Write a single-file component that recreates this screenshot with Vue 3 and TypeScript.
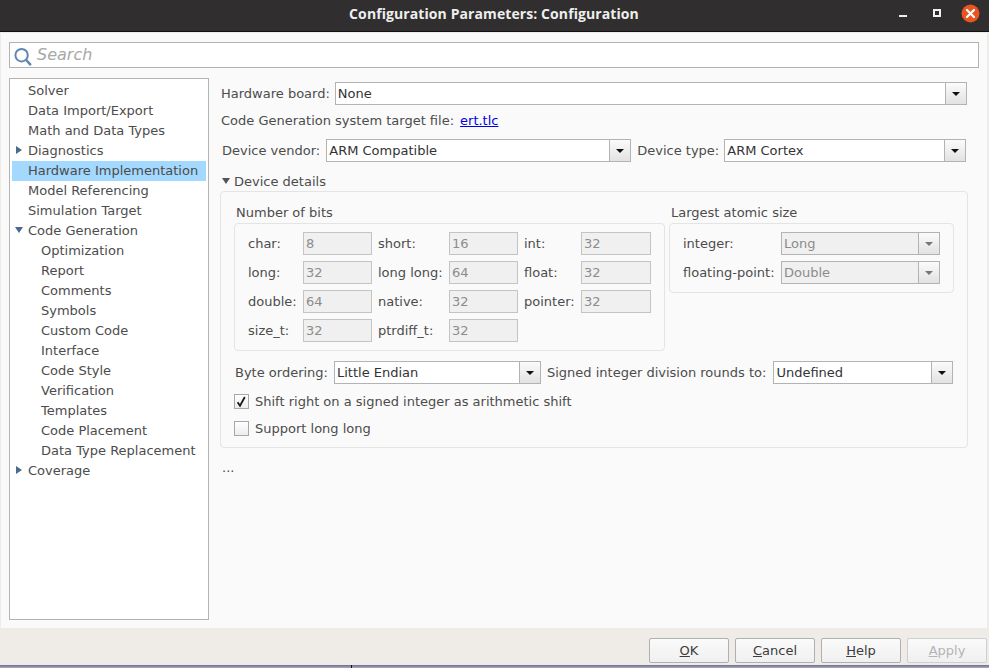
<script setup lang="ts">
interface TreeRow { label: string; indent: number; arrow?: 'right' | 'down'; selected?: boolean }
const tree: TreeRow[] = [
  { label: 'Solver', indent: 0 },
  { label: 'Data Import/Export', indent: 0 },
  { label: 'Math and Data Types', indent: 0 },
  { label: 'Diagnostics', indent: 0, arrow: 'right' },
  { label: 'Hardware Implementation', indent: 0, selected: true },
  { label: 'Model Referencing', indent: 0 },
  { label: 'Simulation Target', indent: 0 },
  { label: 'Code Generation', indent: 0, arrow: 'down' },
  { label: 'Optimization', indent: 1 },
  { label: 'Report', indent: 1 },
  { label: 'Comments', indent: 1 },
  { label: 'Symbols', indent: 1 },
  { label: 'Custom Code', indent: 1 },
  { label: 'Interface', indent: 1 },
  { label: 'Code Style', indent: 1 },
  { label: 'Verification', indent: 1 },
  { label: 'Templates', indent: 1 },
  { label: 'Code Placement', indent: 1 },
  { label: 'Data Type Replacement', indent: 1 },
  { label: 'Coverage', indent: 0, arrow: 'right' },
]
const bits = [
  ['char:', '8'], ['short:', '16'], ['int:', '32'],
  ['long:', '32'], ['long long:', '64'], ['float:', '32'],
  ['double:', '64'], ['native:', '32'], ['pointer:', '32'],
  ['size_t:', '32'], ['ptrdiff_t:', '32'],
]
</script>

<template>
  <div class="window">
    <header class="titlebar">
      <span class="title">Configuration Parameters: Configuration</span>
      <span class="ctl min"></span>
      <span class="ctl max"></span>
      <span class="ctl close">
        <svg width="19" height="19" viewBox="0 0 19 19"><circle cx="9.5" cy="9.5" r="9" fill="#e95420" /><path d="M6 6l7 7M13 6l-7 7" stroke="#fff" stroke-width="2.2" stroke-linecap="round" /></svg>
      </span>
    </header>

    <main class="panel">
      <div class="search">
        <svg width="20" height="20" viewBox="0 0 20 20"><circle cx="7.6" cy="8.2" r="6.2" fill="none" stroke="#5f88b0" stroke-width="2" /><path d="M12.2 13l4 4.4" stroke="#5f88b0" stroke-width="2.6" stroke-linecap="round" /></svg>
        <span>Search</span>
      </div>

      <div class="columns">
        <nav class="tree">
          <div v-for="r in tree" :key="r.label" class="row" :class="{ selected: r.selected, sub: r.indent }">
            <i v-if="r.arrow" :class="'tri-' + r.arrow"></i>
            {{ r.label }}
          </div>
        </nav>

        <section class="form">
          <div class="line hw">
            <label>Hardware board:</label>
            <div class="combo grow"><span>None</span><b><i></i></b></div>
          </div>
          <div class="line target">
            <label>Code Generation system target file:</label>
            <a>ert.tlc</a>
          </div>
          <div class="line device">
            <label>Device vendor:</label>
            <div class="combo vendor"><span>ARM Compatible</span><b><i></i></b></div>
            <label>Device type:</label>
            <div class="combo grow"><span>ARM Cortex</span><b><i></i></b></div>
          </div>
          <div class="details-head"><i class="tri-grey"></i>Device details</div>

          <div class="details">
            <div class="groups">
              <div class="bits">
                <div class="cap">Number of bits</div>
                <div class="box bitgrid">
                  <template v-for="b in bits" :key="b[0]">
                    <label>{{ b[0] }}</label>
                    <div class="field">{{ b[1] }}</div>
                  </template>
                </div>
              </div>
              <div class="atomic">
                <div class="cap">Largest atomic size</div>
                <div class="box atomgrid">
                  <label>integer:</label>
                  <div class="combo off"><span>Long</span><b><i></i></b></div>
                  <label>floating-point:</label>
                  <div class="combo off"><span>Double</span><b><i></i></b></div>
                </div>
              </div>
            </div>

            <div class="line order">
              <label class="l1">Byte ordering:</label>
              <div class="combo endian"><span>Little Endian</span><b><i></i></b></div>
              <label class="l2">Signed integer division rounds to:</label>
              <div class="combo round"><span>Undefined</span><b><i></i></b></div>
            </div>

            <div class="check first">
              <span class="cb">
                <svg width="13" height="13" viewBox="0 0 13 13"><path d="M2.6 7.2l2.4 3.6L9.8 2" fill="none" stroke="#1a1a1a" stroke-width="1.8" /></svg>
              </span>
              Shift right on a signed integer as arithmetic shift
            </div>
            <div class="check">
              <span class="cb"></span>
              Support long long
            </div>
          </div>
          <div class="dots">...</div>
        </section>
      </div>
    </main>

    <footer class="footer">
      <button><u>O</u>K</button>
      <button><u>C</u>ancel</button>
      <button><u>H</u>elp</button>
      <button class="dis"><u>A</u>pply</button>
    </footer>
    <div class="desktop"><i></i></div>
  </div>
</template>

<style>
html, body { margin: 0; background: #efebe6; }
</style>

<style scoped>
.window {
  width: 989px; height: 668px; display: flex; flex-direction: column; overflow: hidden;
  background: #efebe6; color: #4c4c4c;
  font: 13px/20px "DejaVu Sans", sans-serif;
}
.titlebar {
  position: relative; flex: none; height: 31px; background: #302e2e; border-bottom: 1px solid #111;
  display: flex; align-items: center; justify-content: center;
}
.title { color: #eeeeee; font: bold 14px "Open Sans", sans-serif; letter-spacing: .09px; margin-right: 1px; margin-top: -4px; }
.ctl { position: absolute; display: block; }
.min { left: 899px; top: 15px; width: 8px; height: 2px; background: #eee; }
.max { left: 933px; top: 9px; width: 4px; height: 4px; border: 2.5px solid #f2f2f2; background: #302e2e; }
.close { left: 961px; top: 4px; width: 19px; height: 19px; }

.panel { flex: none; height: 595px; margin: 1px 2px 0 1px; background: #fafafa; padding: 9px 8px 0 8px; box-sizing: border-box; }
.search {
  height: 26px; box-sizing: border-box; border: 1px solid #b3b3b3; background: #fff;
  display: flex; align-items: center; padding-left: 4px; gap: 3px;
  font: italic 16px "DejaVu Sans", sans-serif; color: #a8a8a8;
}
.search svg { margin-top: 3px; }
.search span { margin-top: -2px; }
.columns { display: flex; margin-top: 10px; }
.tree {
  flex: none; width: 200px; height: 542px; box-sizing: border-box; border: 1px solid #b3b3b3;
  background: #fff; padding: 2px;
}
.row { position: relative; height: 20px; line-height: 19px; padding-left: 16px; white-space: nowrap; }
.row.sub { padding-left: 29px; }
.row.selected { background: #a3d8ff; }
.tri-right { position: absolute; left: 4px; top: 5px; border-left: 6px solid #4a6a8c; border-top: 4px solid transparent; border-bottom: 4px solid transparent; }
.tri-down { position: absolute; left: 3px; top: 6px; border-top: 6px solid #4a6a8c; border-left: 4px solid transparent; border-right: 4px solid transparent; }

.form { flex: 1; padding: 4px 12px 0 12px; min-width: 0; }
.line { display: flex; align-items: center; }
.hw { gap: 5px; height: 23px; }
.target { margin-top: 4px; height: 23px; gap: 6px; }
.target a { color: #0000e6; text-decoration: underline; }
.device { margin-top: 7px; height: 23px; padding-left: 1px; padding-right: 1px; }
.device label { margin-right: 5px; }
.device label:first-child { margin-right: 6px; }
.vendor { width: 305px; margin-right: 6px; flex: none; }

.combo {
  height: 23px; box-sizing: border-box; border: 1px solid #b3b3b3; background: #fff;
  display: flex; align-items: center; color: #333; min-width: 0;
}
.combo.grow { flex: 1; }
.combo span { flex: 1; padding-left: 2px; white-space: nowrap; }
.combo b {
  flex: none; width: 21px; height: 100%; border-left: 1px solid #b3b3b3; box-sizing: border-box;
  background: linear-gradient(#fbfbfb, #e2e2e2); display: flex; align-items: center; justify-content: center;
}
.combo b i { border-top: 4px solid #111; border-left: 4px solid transparent; border-right: 4px solid transparent; }
.combo.off { background: #f0f0f0; color: #8c8c8c; }
.combo.off b i { border-top-color: #777; }

.details-head { margin-top: 10px; height: 19px; padding-left: 1px; display: flex; align-items: center; line-height: 20px; }
.tri-grey { border-top: 6px solid #555; border-left: 4px solid transparent; border-right: 4px solid transparent; margin-right: 4px; margin-top: -1px; }
.details {
  width: 748px; height: 257px; box-sizing: border-box; margin-left: -1px;
  border: 1px solid #e4e4e4; border-radius: 4px; padding: 10px 14px 0 13px;
}
.groups { display: flex; gap: 4px; height: 159px; }
.cap { padding-left: 2px; height: 21px; line-height: 21px; }
.box { border: 1px solid #e4e4e4; border-radius: 4px; box-sizing: border-box; padding: 8px 13px; }
.bitgrid {
  width: 431px; height: 128px; display: grid; align-content: start; row-gap: 6px;
  grid-template-columns: 55px 75px 71px 75px 57px 70px; grid-auto-rows: 23px; align-items: center;
}
.field {
  height: 23px; box-sizing: border-box; border: 1px solid #c4c4c4; background: #f0f0f0; color: #8c8c8c;
  line-height: 21px; padding-left: 2px; width: 69px;
}
.field:nth-child(6n) { width: 70px; }
.atomic { width: 285px; }
.atomgrid { height: 70px; display: grid; grid-template-columns: 98px 159px; grid-auto-rows: 23px; row-gap: 6px; align-items: center; }
.order { padding-left: 1px; height: 23px; }
.l1 { margin-right: 6px; }
.l2 { margin-right: 7px; }
.order label { white-space: nowrap; }
.endian { width: 207px; margin-right: 6px; flex: none; }
.round { width: 180px; flex: none; }
.check { display: flex; align-items: center; gap: 6px; height: 15px; line-height: 15px; }
.check.first { margin-top: 10px; }
.check + .check { margin-top: 12px; }
.cb {
  width: 15px; height: 15px; box-sizing: border-box; border: 1px solid #a8a8a8; background: linear-gradient(#fff, #ececec);
  display: flex; align-items: center; justify-content: center;
}
.dots { margin-top: 10px; padding-left: 1px; }

.footer { flex: 1; display: flex; justify-content: flex-end; gap: 6px; padding: 10px 2px 0 0; box-sizing: border-box; }
button {
  width: 80px; height: 25px; box-sizing: border-box; border: 1px solid #b0b0b0; border-radius: 2px;
  background: linear-gradient(#fafafa, #f0f0f0); color: #3c3c3c; font: 13px "DejaVu Sans", sans-serif; padding: 0;
}
button.dis { color: #b4b4b4; border-color: #cfcfcf; }
.desktop { flex: none; height: 3px; background: linear-gradient(#6e6e8a, #aaaac8); position: relative; }
.desktop i { position: absolute; left: 351px; top: 0; width: 1px; height: 3px; background: #111; }
</style>
